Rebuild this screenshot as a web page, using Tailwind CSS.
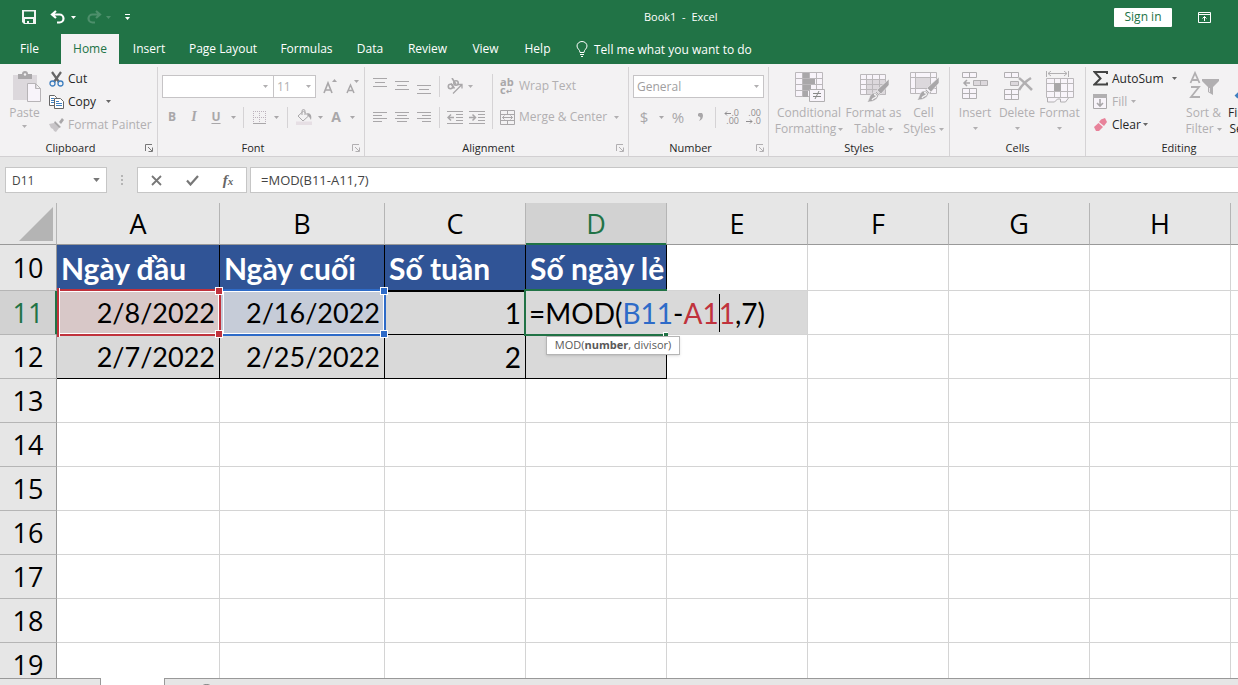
<!DOCTYPE html>
<html lang="vi">

<head>
    <meta charset="UTF-8">
    <meta name="viewport" content="width=device-width, initial-scale=1.0">
    <title>Book1 - Excel</title>
    <script src="https://cdn.jsdelivr.net/npm/@tailwindcss/browser@4"></script>
</head>

<body class="h-screen flex flex-col overflow-hidden bg-[#e6e6e6] font-['Open_Sans','Noto_Sans',sans-serif] text-[12px] leading-4 text-[#262626]">
    <!-- shared symbols -->
    <svg class="hidden">
        <symbol id="caret" viewBox="0 0 5 3"><path d="M0 0h5L2.5 3z" fill="currentColor" /></symbol>
        <symbol id="launcher" viewBox="0 0 8 8"><path d="M.5 7V.5H7M3 3l4 4M7.500 3.500v4h-4" fill="none" stroke="currentColor" /></symbol>
        <symbol id="brush" viewBox="0 0 24 24"><path d="M23 0v6l-8 9-4-4zM10 12l4 4-1 1-4-4z" fill="#a9a7a9" stroke="#f3f2f3" stroke-width=".6" /><path d="M8 14c3 0 5 2 4 4-2 4-7 5-11 5 3-2 2-9 7-9z" fill="#a9a7a9" stroke="#f3f2f3" stroke-width=".6" /><path d="M8 15.500c2 0 3 1.500 2 2.500s-3 1-4 3" stroke="#f3f2f3" fill="none" stroke-width="1.300" /></symbol>
    </svg>

    <!-- title bar -->
    <header class="bg-[#217346] text-white shrink-0">
        <div class="h-[34px] flex items-center relative">
            <div class="flex items-center pl-[22px]">
                <button aria-label="Save" class="w-[14px]"><svg class="size-[14px]" viewBox="0 0 14 14"><path d="M0 0h14v14H2l-2-2zM2 1.500V7h10V1.500zM3 9v4h2v-2h2v2h4V9z" fill="#f2f5f3" fill-rule="evenodd" /></svg></button>
                <button aria-label="Undo" class="ml-[14px]"><svg class="w-[16px] h-[14px]" viewBox="0 0 16 14"><path d="M6 1L2 4.500 6 8M2 4.500h7.500a4 4 0 0 1 0 8H7" fill="none" stroke="#fff" stroke-width="2.200" /></svg></button>
                <button aria-label="Undo list" class="ml-[5px]"><svg class="w-[5px] h-[3px]"><use href="#caret" /></svg></button>
                <button aria-label="Redo" class="ml-[10px] text-[#4d8f6b]"><svg class="w-[16px] h-[14px]" viewBox="0 0 16 14"><path d="M10 1l4 3.500L10 8M14 4.500H6.500a4 4 0 0 0 0 8H9" fill="none" stroke="currentColor" stroke-width="2.200" /></svg></button>
                <button aria-label="Redo list" class="ml-[4px] text-[#4d8f6b]"><svg class="w-[5px] h-[3px]"><use href="#caret" /></svg></button>
                <button aria-label="Customize toolbar" class="ml-[14px]"><svg class="w-[5px] h-[6px]" viewBox="0 0 5 6"><path d="M0 0h5v1H0zM0 3h5L2.500 6z" fill="#fff" /></svg></button>
            </div>
            <h1 class="absolute left-[644px] text-[11px] whitespace-pre">Book1  -  Excel</h1>
            <button class="ml-auto w-[58px] h-[19px] bg-white text-[#217346] rounded-[1px]">Sign in</button>
            <button aria-label="Ribbon display options" class="ml-[26px] mr-[27px]"><svg class="w-[13px] h-[11px]" viewBox="0 0 13 11"><path d="M.5.5h12v10H.5zM.5 2.500h12M6.500 9V4.500M4.500 6.500l2-2 2 2" fill="none" stroke="#fff" /></svg></button>
        </div>
        <nav class="h-[30px] flex text-[12px] leading-[29px]">
            <a href="#" class="w-[61px] pl-[20px]">File</a>
            <a href="#" class="w-[58px] text-center bg-[#f3f2f3] text-[#217346]">Home</a>
            <a href="#" class="w-[56px] ml-[2px] text-center">Insert</a>
            <a href="#" class="w-[92px] text-center">Page Layout</a>
            <a href="#" class="w-[75px] text-center">Formulas</a>
            <a href="#" class="w-[52px] text-center">Data</a>
            <a href="#" class="w-[63px] text-center">Review</a>
            <a href="#" class="w-[53px] text-center">View</a>
            <a href="#" class="w-[51px] text-center">Help</a>
            <a href="#" class="pl-[13px] flex items-center gap-[6px]">
                <svg class="w-[12px] h-[16px]" viewBox="0 0 12 16"><path d="M4 11.500c0-3-3-3.500-3-6.500a5 4.500 0 0 1 10 0c0 3-3 3.500-3 6.500zM4 13.500h4M5 15.500h2" fill="none" stroke="#fff" /></svg>
                Tell me what you want to do
            </a>
        </nav>
    </header>

    <!-- ribbon -->
    <div class="flex shrink-0 pt-[3px] bg-[#f3f2f3] border-b border-[#d2d0d2] text-[#b1afb1] overflow-hidden [&_button]:shrink-0 [&_svg]:shrink-0">
        <!-- clipboard -->
        <section class="w-[158px] shrink-0 border-r border-[#d5d3d5]">
            <div class="h-[69px] flex">
                <button class="w-[49px] pt-[4px] flex flex-col items-center">
                    <svg class="w-[28px] h-[32px] ml-[4px] mb-[2px]" viewBox="0 0 28 32"><path d="M0 4h24v25H0z" fill="#dcd8dc" /><path d="M5 3h4a3 3 0 0 1 6 0h4v5H5z" fill="#a9a7a9" /><circle cx="12" cy="3.500" r="1.200" fill="#f3f2f3" /><path d="M14.500 12.500h8l5 5v13h-13zM22.500 12.500v5h5" fill="#f8f4fa" stroke="#b7b4b7" /></svg>
                    <span>Paste</span>
                    <svg class="w-[5px] h-[3px] mt-[4px]"><use href="#caret" /></svg>
                </button>
                <div class="flex flex-col">
                    <button class="h-[23px] flex items-center gap-[4px] text-[#262626]">
                        <svg class="w-[15px] h-[16px]" viewBox="0 0 15 16"><path d="M3 1l7 10M12 1L5 11" stroke="#666" stroke-width="2.200" /><circle cx="3.500" cy="12.500" r="2.500" fill="none" stroke="#3f7fbf" stroke-width="1.300" /><circle cx="11.500" cy="12.500" r="2.500" fill="none" stroke="#3f7fbf" stroke-width="1.300" /></svg>
                        Cut
                    </button>
                    <button class="h-[23px] flex items-center gap-[4px] text-[#262626]">
                        <svg class="w-[15px] h-[14px]" viewBox="0 0 15 14"><path d="M.5.500h5l2 2v8h-7z" fill="#fff" stroke="#666" /><path d="M2 3.500h3M2 5.500h4M2 7.500h4" stroke="#3f7fbf" /><path d="M5.500 3.500h6l3 3v7h-9z" fill="#fff" stroke="#666" /><path d="M7 6.500h3M7 8.500h6M7 10.500h6" stroke="#3f7fbf" /></svg>
                        Copy
                        <svg class="w-[5px] h-[3px] ml-[6px] text-[#666]"><use href="#caret" /></svg>
                    </button>
                    <button class="h-[23px] flex items-center gap-[4px] whitespace-nowrap">
                        <svg class="w-[15px] h-[14px]" viewBox="0 0 15 14"><path d="M0 6l5-1 5 5-3 4-2-1-1-2-2-1z" fill="#c9c6c9" /><path d="M6 3l6 6-2 1-5-5zM10 4l3-4 2 2-3 4z" fill="#a9a7a9" /></svg>
                        Format Painter
                    </button>
                </div>
            </div>
            <div class="mt-1 flex items-center justify-center relative pr-[16px] text-[11px] text-[#262626]">Clipboard
                <button aria-label="Clipboard settings" class="absolute right-[4px] text-[#777]"><svg class="size-[8px]"><use href="#launcher" /></svg></button>
            </div>
        </section>
        <!-- font -->
        <section class="w-[207px] shrink-0 border-r border-[#d5d3d5]">
            <div class="h-[69px] pt-[8px] flex flex-col gap-[7px]">
                <div class="flex pl-[4px]">
                    <label class="relative flex items-center"><input aria-label="Font" class="w-[112px] h-[23px] bg-white border border-[#c6c4c6] outline-none"><svg class="absolute right-[6px] w-[5px] h-[3px]"><use href="#caret" /></svg></label>
                    <label class="relative flex items-center -ml-px"><input aria-label="Font size" value="11" class="w-[43px] h-[23px] pl-[3px] bg-white border border-[#c6c4c6] outline-none"><svg class="absolute right-[5px] w-[5px] h-[3px]"><use href="#caret" /></svg></label>
                    <button aria-label="Grow font" class="w-[22px] ml-[3px] flex justify-center items-center"><svg class="w-[14px] h-[16px]" viewBox="0 0 14 16"><path d="M1 14L5 4l4 10M2.500 11h5" fill="none" stroke="#a9a7a9" stroke-width="1.600" /><path d="M9 3h5l-2.500-3z" fill="#a9a7a9" /></svg></button>
                    <button aria-label="Shrink font" class="w-[22px] flex justify-center items-center"><svg class="w-[14px] h-[16px]" viewBox="0 0 14 16"><path d="M2 14l3.500-8L9 14M3 11.500h5" fill="none" stroke="#a9a7a9" stroke-width="1.500" /><path d="M9 1h5l-2.500 3z" fill="#a9a7a9" /></svg></button>
                </div>
                <div class="flex items-center h-[24px] pl-[3px] text-[#a9a7a9]">
                    <button class="w-[22px] font-bold">B</button>
                    <button class="w-[22px] font-bold italic font-['Liberation_Serif',serif] text-[14px]">I</button>
                    <button class="w-[22px] font-bold underline underline-offset-2">U</button>
                    <button aria-label="Underline styles" class="w-[12px] flex justify-center"><svg class="w-[5px] h-[3px]"><use href="#caret" /></svg></button>
                    <i class="w-px h-[21px] bg-[#d5d3d5] mx-[4px]"></i>
                    <button aria-label="Borders" class="w-[22px] flex justify-center"><svg class="size-[13px]" viewBox="0 0 13 13"><path d="M.5 0v12M6.500 0v12M12.500 0v12M0 .5h13M0 6.500h13" stroke="#bdb3bd" stroke-dasharray="1 1" /><path d="M0 12.500h13" stroke="#a9a7a9" /></svg></button>
                    <button aria-label="Border styles" class="w-[12px] flex justify-center"><svg class="w-[5px] h-[3px]"><use href="#caret" /></svg></button>
                    <i class="w-px h-[21px] bg-[#d5d3d5] mx-[5px]"></i>
                    <button aria-label="Fill color" class="w-[22px] flex justify-center"><svg class="size-[16px]" viewBox="0 0 16 16"><path d="M0 12.500h16V16H0z" fill="#e6dfe4" /><path d="M7.500 2l5 5-5.500 5-5-5z" fill="#f3f2f3" stroke="#a9a7a9" /><path d="M6 6V2a1.500 1.500 0 0 1 3 0v4" fill="none" stroke="#a9a7a9" /><path d="M11 4c4 0 5 3 4 7-1-1-1-3-3-4z" fill="#a9a7a9" /></svg></button>
                    <button aria-label="Fill colors" class="w-[10px] flex justify-center"><svg class="w-[5px] h-[3px]"><use href="#caret" /></svg></button>
                    <button class="w-[22px] font-bold text-[14px]">A</button>
                    <button aria-label="Font colors" class="w-[10px] flex justify-center"><svg class="w-[5px] h-[3px]"><use href="#caret" /></svg></button>
                </div>
            </div>
            <div class="mt-1 flex items-center justify-center relative text-[11px] text-[#262626] pr-[16px]">Font
                <button aria-label="Font settings" class="absolute right-[4px] text-[#b1afb1]"><svg class="size-[8px]"><use href="#launcher" /></svg></button>
            </div>
        </section>
        <!-- alignment -->
        <section class="w-[264px] shrink-0 border-r border-[#d5d3d5]">
            <div class="h-[69px] pt-[7px] flex pl-[4px]">
                <div class="flex flex-col gap-[7px]">
                    <div class="flex items-center h-[24px]">
                        <button aria-label="Top align" class="w-[22px] flex justify-center"><svg class="w-[14px] h-[16px]" viewBox="0 0 14 16"><path d="M0 .5h14M2 4.500h10M0 8.500h14" stroke="#a9a7a9" /></svg></button>
                        <button aria-label="Middle align" class="w-[22px] flex justify-center"><svg class="w-[14px] h-[16px]" viewBox="0 0 14 16"><path d="M0 3.500h14M2 7.500h10M0 11.500h14" stroke="#a9a7a9" /></svg></button>
                        <button aria-label="Bottom align" class="w-[22px] flex justify-center"><svg class="w-[14px] h-[16px]" viewBox="0 0 14 16"><path d="M0 7.500h14M2 11.500h10M0 15.500h14" stroke="#a9a7a9" /></svg></button>
                        <i class="w-px h-[21px] bg-[#d5d3d5] mx-[4px]"></i>
                        <button aria-label="Orientation" class="w-[22px] flex justify-center"><svg class="size-[16px]" viewBox="0 0 16 16"><g fill="none" stroke="#a9a7a9" stroke-width="1.600"><circle cx="3.500" cy="8.500" r="2.200" /><path d="M4 5.500l3.500 5" /><circle cx="9" cy="5" r="2.200" /><path d="M5 0l4 6.500" /></g><path d="M6 15.500L14.500 7M11 6.500h4v4" fill="none" stroke="#a9a7a9" stroke-width="1.300" /></svg></button>
                        <button aria-label="Orientation list" class="w-[8px] flex justify-center"><svg class="w-[5px] h-[3px]"><use href="#caret" /></svg></button>
                    </div>
                    <div class="flex items-center h-[24px]">
                        <button aria-label="Align left" class="w-[22px] flex justify-center"><svg class="w-[14px] h-[10px]" viewBox="0 0 14 10"><path d="M0 .5h14M0 3.500h9M0 6.500h14M0 9.500h9" stroke="#a9a7a9" /></svg></button>
                        <button aria-label="Center" class="w-[22px] flex justify-center"><svg class="w-[14px] h-[10px]" viewBox="0 0 14 10"><path d="M0 .5h14M2 3.500h10M0 6.500h14M2 9.500h10" stroke="#a9a7a9" /></svg></button>
                        <button aria-label="Align right" class="w-[22px] flex justify-center"><svg class="w-[14px] h-[10px]" viewBox="0 0 14 10"><path d="M0 .5h14M5 3.500h9M0 6.500h14M5 9.500h9" stroke="#a9a7a9" /></svg></button>
                        <i class="w-px h-[21px] bg-[#d5d3d5] mx-[4px]"></i>
                        <button aria-label="Decrease indent" class="w-[22px] flex justify-center"><svg class="w-[16px] h-[13px]" viewBox="0 0 16 13"><path d="M0 .5h16M9 3.500h7M9 6.500h7M9 9.500h7M0 12.500h16" stroke="#a9a7a9" /><path d="M7 6.500H1M4 3.500l-3 3 3 3" fill="none" stroke="#a9a7a9" stroke-width="1.500" /></svg></button>
                        <button aria-label="Increase indent" class="w-[22px] flex justify-center"><svg class="w-[16px] h-[13px]" viewBox="0 0 16 13"><path d="M0 .5h16M9 3.500h7M9 6.500h7M9 9.500h7M0 12.500h16" stroke="#a9a7a9" /><path d="M0 6.500h6M3.500 3.500l3 3-3 3" fill="none" stroke="#a9a7a9" stroke-width="1.500" /></svg></button>
                    </div>
                </div>
                <i class="w-px h-[55px] bg-[#d5d3d5] ml-[4px] mr-[7px]"></i>
                <div class="flex flex-col gap-[7px]">
                    <button class="h-[24px] flex items-center gap-[4px] whitespace-nowrap"><span class="w-[15px] text-[11px] leading-[8px] font-bold text-left text-[#a9a7a9]">ab<br>c<span class="text-[8px]">↵</span></span>Wrap Text</button>
                    <div class="flex items-center h-[24px]">
                        <button class="flex items-center gap-[4px] whitespace-nowrap"><svg class="size-[15px]" viewBox="0 0 15 15"><path d="M.5.500h14v14H.5zM0 4.500h15M0 10.500h15M7.500 0v4M7.500 11v4M2.500 7.500h10M4.500 5.500l-2 2 2 2M10.500 5.500l2 2-2 2" fill="none" stroke="#a9a7a9" /></svg>Merge &amp; Center</button>
                        <button aria-label="Merge options" class="ml-[7px]"><svg class="w-[5px] h-[3px]"><use href="#caret" /></svg></button>
                    </div>
                </div>
            </div>
            <div class="mt-1 flex items-center justify-center relative text-[11px] text-[#262626] pr-[16px]">Alignment
                <button aria-label="Alignment settings" class="absolute right-[4px] text-[#b1afb1]"><svg class="size-[8px]"><use href="#launcher" /></svg></button>
            </div>
        </section>
        <!-- number -->
        <section class="w-[140px] shrink-0 border-r border-[#d5d3d5]">
            <div class="h-[69px] pt-[8px] pl-[4px] flex flex-col gap-[7px]">
                <label class="relative flex items-center w-[131px]">
                    <select aria-label="Number format" class="appearance-none w-full h-[23px] pl-[3px] bg-white border border-[#c6c4c6] text-[12px] text-[#a09ea0]"><option>General</option></select>
                    <svg class="absolute right-[5px] w-[5px] h-[3px]"><use href="#caret" /></svg>
                </label>
                <div class="flex items-center h-[24px] text-[#a9a7a9]">
                    <button class="w-[22px] text-[15px]">$</button>
                    <button aria-label="Currency list" class="w-[12px] flex justify-center"><svg class="w-[5px] h-[3px]"><use href="#caret" /></svg></button>
                    <button class="w-[22px] text-[15px]">%</button>
                    <button aria-label="Comma style" class="w-[22px] flex justify-center"><svg class="w-[5px] h-[8px]" viewBox="0 0 5 8"><path d="M1 0h3l1 2c0 3-1 5-4 6 1-2 2-3 1-4L0 3V1z" fill="#a9a7a9" /></svg></button>
                    <i class="w-px h-[21px] bg-[#d5d3d5] mx-[4px]"></i>
                    <button aria-label="Increase decimal" class="w-[22px] text-[9px] leading-[8px] text-right pr-[3px] text-[#8f8d8f]"><span class="flex justify-end items-center"><svg class="w-[7px] h-[5px]" viewBox="0 0 7 5"><path d="M7 2.500H1M3 .5l-2 2 2 2" fill="none" stroke="currentColor" /></svg>.0</span>.00</button>
                    <button aria-label="Decrease decimal" class="w-[22px] text-[9px] leading-[8px] text-right pr-[3px] text-[#8f8d8f]">.00<span class="flex justify-end items-center"><svg class="w-[7px] h-[5px]" viewBox="0 0 7 5"><path d="M0 2.500h6M4 .5l2 2-2 2" fill="none" stroke="currentColor" /></svg>.0</span></button>
                </div>
            </div>
            <div class="mt-1 flex items-center justify-center relative text-[11px] text-[#262626] pr-[16px]">Number
                <button aria-label="Number settings" class="absolute right-[4px] text-[#b1afb1]"><svg class="size-[8px]"><use href="#launcher" /></svg></button>
            </div>
        </section>
        <!-- styles -->
        <section class="w-[181px] shrink-0 border-r border-[#d5d3d5]">
            <div class="h-[69px] flex pt-[4px] pl-[3px]">
                <button class="w-[74px] flex flex-col items-center">
                    <svg class="size-[32px] mb-[2px]" viewBox="0 0 32 32"><path d="M2.500 1.500h27v24h-27zM2 7.500h28M2 13.500h28M2 19.500h28M9.500 1v25M16.500 1v25M23.500 1v25" fill="#f8f4fa" stroke="#bbb8bb" /><path d="M10 2h6v5h-6zM10 8h12v5H10zM10 14h8v5h-8zM10 20h5v6h-5z" fill="#a9a7a9" /><path d="M16.500 18.500h15v12h-15z" fill="#f8f4fa" stroke="#b1afb1" /><path d="M20 22.500h8M20 25.500h8M26 20l-4 8" stroke="#888" /></svg>
                    <span>Conditional</span>
                    <span class="flex items-center gap-[2px]">Formatting<svg class="w-[5px] h-[3px]"><use href="#caret" /></svg></span>
                </button>
                <button class="w-[55px] flex flex-col items-center whitespace-nowrap">
                    <svg class="size-[32px] mb-[2px]" viewBox="0 0 32 32"><path d="M2.500 3.500h25v20h-25z" fill="#f8f4fa" /><path d="M9 9h19v15H9z" fill="#dcd8dc" /><path d="M2.500 3.500h25v20h-25zM2 8.500h26M2 13.500h26M2 18.500h26M8.500 3v21M14.500 3v21M21.500 3v21" fill="none" stroke="#bbb8bb" /><use href="#brush" x="8" y="8" width="24" height="24" /></svg>
                    <span>Format as</span>
                    <span class="flex items-center gap-[3px]">Table<svg class="w-[5px] h-[3px]"><use href="#caret" /></svg></span>
                </button>
                <button class="w-[45px] flex flex-col items-center">
                    <svg class="size-[32px] mb-[2px]" viewBox="0 0 32 32"><path d="M2.500 1.500h26v21h-26z" fill="#f8f4fa" /><path d="M8 7h14v11H8z" fill="#dcd8dc" /><path d="M2.500 1.500h26v21h-26zM2 6.500h27M2 17.500h27M7.500 1v22M22.500 1v22" fill="none" stroke="#bbb8bb" /><use href="#brush" x="8" y="6" width="24" height="24" /></svg>
                    <span>Cell</span>
                    <span class="flex items-center gap-[3px]">Styles<svg class="w-[5px] h-[3px]"><use href="#caret" /></svg></span>
                </button>
            </div>
            <div class="mt-1 text-center text-[11px] text-[#262626]">Styles</div>
        </section>
        <!-- cells -->
        <section class="w-[136px] shrink-0 border-r border-[#d5d3d5]">
            <div class="h-[69px] flex pt-[4px] pl-[4px]">
                <button class="w-[42px] flex flex-col items-center">
                    <svg class="size-[32px] mb-[2px]" viewBox="0 0 32 32"><path d="M3.500 1.500h14v5h-14zM10.500 1v6M3.500 17.500h14v10h-14zM3 22.500h15M10.500 17v11" fill="#f8f4fa" stroke="#b1afb1" /><path d="M14.500 9.500h14v5h-14zM21.500 9v6" fill="#dcd8dc" stroke="#b1afb1" /><path d="M11 12H5M8 9l-3 3 3 3" fill="none" stroke="#a9a7a9" stroke-width="1.500" /></svg>
                    <span>Insert</span>
                    <svg class="w-[5px] h-[3px] mt-[6px]"><use href="#caret" /></svg>
                </button>
                <button class="w-[42px] flex flex-col items-center">
                    <svg class="size-[32px] mb-[2px]" viewBox="0 0 32 32"><path d="M3.500 1.500h14v5h-14zM10.500 1v6M3.500 18.500h14v10h-14zM3 23.500h15M10.500 18v11" fill="#f8f4fa" stroke="#b1afb1" /><path d="M9.500 10.500h8v4h-8z" fill="#dcd8dc" stroke="#b1afb1" /><path d="M18 7c4 3 8 7 13 12M30 7c-5 3-9 7-12 12" stroke="#b1afb1" stroke-width="2.500" fill="none" /></svg>
                    <span>Delete</span>
                    <svg class="w-[5px] h-[3px] mt-[6px]"><use href="#caret" /></svg>
                </button>
                <button class="w-[43px] flex flex-col items-center">
                    <svg class="size-[32px] mb-[2px]" viewBox="0 0 32 32"><path d="M2.500 0v6M24.500 0v6M4 2.500h19M7 0L4 2.500 7 5M20 0l3 2.500L20 5" fill="none" stroke="#b1afb1" /><path d="M2.500 7.500h27v19h-27zM2 12.500h28M2 20.500h28M10.500 7v20M16.500 7v20M23.500 7v20" fill="#f8f4fa" stroke="#bbb8bb" /><path d="M10 12h7v8h-7z" fill="#a9a7a9" /><path d="M3.500 27v4h7l3-3h3v3h5l3-4" fill="#f8f4fa" stroke="#b1afb1" /></svg>
                    <span>Format</span>
                    <svg class="w-[5px] h-[3px] mt-[6px]"><use href="#caret" /></svg>
                </button>
            </div>
            <div class="mt-1 text-center text-[11px] text-[#262626]">Cells</div>
        </section>
        <!-- editing -->
        <section class="w-[186px] shrink-0">
            <div class="h-[69px] flex pl-[7px]">
                <div class="w-[88px] shrink-0 flex flex-col">
                    <div class="h-[23px] flex items-center text-[#262626]">
                        <button class="flex items-center gap-[4px]"><svg class="w-[15px] h-[15px]" viewBox="0 0 15 15"><path d="M14 3V1H1.500l6 6.500-6 6H14v-2" fill="none" stroke="#444" stroke-width="2" /></svg>AutoSum</button>
                        <button aria-label="AutoSum list" class="ml-auto mr-[4px] text-[#666]"><svg class="w-[5px] h-[3px]"><use href="#caret" /></svg></button>
                    </div>
                    <button class="h-[23px] flex items-center gap-[4px]"><svg class="w-[14px] h-[15px] mr-px" viewBox="0 0 14 15"><path d="M.5.500h13v14H.5z" fill="#f8f4fa" stroke="#a9a7a9" /><path d="M0 0h14v4H0z" fill="#b1afb1" /><path d="M7 5v7M4 9l3 3 3-3" fill="none" stroke="#a9a7a9" stroke-width="1.600" /></svg>Fill<svg class="w-[5px] h-[3px]"><use href="#caret" /></svg></button>
                    <button class="h-[23px] flex items-center gap-[4px] text-[#262626]"><svg class="w-[15px] h-[14px]" viewBox="0 0 15 14"><path d="M8 1.500l4-1.500 2 4-3 4-5-4z" fill="#e8829a" /><path d="M5.500 5l4.500 4-4 4H3L1 9z" fill="#e8829a" /></svg>Clear<svg class="w-[5px] h-[3px] -ml-[2px] text-[#666]"><use href="#caret" /></svg></button>
                </div>
                <button class="w-[45px] pt-[4px] flex flex-col items-center whitespace-nowrap">
                    <svg class="size-[32px] mb-[2px]" viewBox="0 0 32 32"><path d="M2.500 12L7 2l4.500 10M4 9h6M3 16h8L3 26h9" fill="none" stroke="#b1afb1" stroke-width="1.800" /><path d="M14 8h17v2l-6 6v8l-5-3v-5l-6-6z" fill="#b1afb1" /><path d="M21.500 17v4" stroke="#e8e4e8" /></svg>
                    <span>Sort &amp;</span>
                    <span class="flex items-center gap-[3px]">Filter<svg class="w-[5px] h-[3px]"><use href="#caret" /></svg></span>
                </button>
                <button class="w-[40px] pt-[4px] flex flex-col items-center text-[#262626] whitespace-nowrap">
                    <svg class="size-[32px] mb-[2px]" viewBox="0 0 32 32"><circle cx="20" cy="12" r="8" fill="none" stroke="#3f7fbf" stroke-width="2" /><path d="M14 18l-8 8" stroke="#3f7fbf" stroke-width="4" /></svg>
                    <span>Find &amp;</span>
                    <span>Select</span>
                </button>
            </div>
            <div class="mt-1 text-center text-[11px] text-[#262626]">Editing</div>
        </section>
    </div>

    <!-- formula bar -->
    <div class="flex shrink-0 items-start h-[46px] pt-[10px] pl-[5px] text-[#444]">
        <label class="relative flex items-center">
            <input aria-label="Name box" value="D11" class="w-[102px] h-[26px] pl-[6px] bg-white border border-[#c6c6c6] outline-none">
            <svg class="absolute right-[7px] w-[7px] h-[4px] text-[#777]" viewBox="0 0 5 3"><use href="#caret" /></svg>
        </label>
        <svg class="w-[2px] h-[10px] mt-[8px] mx-[14px]" viewBox="0 0 2 10"><path d="M0 0h2v2H0zM0 4h2v2H0zM0 8h2v2H0z" fill="#b5b5b5" /></svg>
        <div class="h-[26px] w-[110px] flex items-center bg-white border border-[#c6c6c6]">
            <button aria-label="Cancel" class="w-[36px] flex justify-center"><svg class="size-[11px]" viewBox="0 0 11 11"><path d="M1 1l9 9M10 1l-9 9" stroke="#777" stroke-width="1.800" /></svg></button>
            <button aria-label="Enter" class="w-[36px] flex justify-center"><svg class="w-[13px] h-[11px]" viewBox="0 0 13 11"><path d="M1 5.500L4.500 9.500 12 1" fill="none" stroke="#777" stroke-width="2.200" /></svg></button>
            <button class="w-[36px] font-['Liberation_Serif',serif] italic font-bold text-[15px] text-[#666]">f<span class="text-[11px]">x</span></button>
        </div>
        <input aria-label="Formula" value="=MOD(B11-A11,7)" class="flex-1 min-w-0 h-[26px] ml-[3px] pl-[10px] bg-white border border-r-0 border-[#c6c6c6] text-[13px] outline-none">
    </div>

    <!-- sheet -->
    <main class="flex-1 min-h-0 overflow-hidden bg-white font-['Lato',sans-serif] text-[28px] leading-[34px] text-black">
        <table class="table-fixed border-separate border-spacing-0 w-full [&_th]:p-0 [&_th]:font-normal [&_th]:font-['Open_Sans',sans-serif] [&_th]:text-[27px] [&_th]:border-r [&_th]:border-b [&_thead_th]:border-r-[#b5b5b5] [&_thead_th]:border-b-[#999] [&_tbody_th]:border-r-[#999] [&_tbody_th]:border-b-[#b5b5b5] [&_th]:bg-[#e6e6e6] [&_td]:px-[4px] [&_td]:py-0 [&_td]:border-r [&_td]:border-b [&_td]:border-[#d4d4d4] [&_td]:whitespace-nowrap [&_tr>*:last-child]:border-r-0">
            <colgroup>
                <col class="w-[57px]"><col class="w-[163px]"><col class="w-[165px]"><col class="w-[141px]"><col class="w-[141px]"><col class="w-[141px]"><col class="w-[141px]"><col class="w-[141px]"><col class="w-[141px]"><col>
            </colgroup>
            <thead>
                <tr class="h-[42px]">
                    <th><svg class="w-[34px] h-[34px] ml-[19px]" viewBox="0 0 34 34"><path d="M34 0v34H0z" fill="#b4b4b4" /></svg></th>
                    <th>A</th><th>B</th><th>C</th>
                    <th class="bg-[#d2d2d2]! border-b-[#217346]! shadow-[inset_0_-1px_#217346] text-[#217346]">D</th>
                    <th>E</th><th>F</th><th>G</th><th>H</th><th></th>
                </tr>
            </thead>
            <tbody>
                <tr class="h-[46px] [&_td]:font-bold [&_td]:text-[30px]">
                    <th>10</th>
                    <td class="bg-[#305496] text-white border-black!">Ngày đầu</td>
                    <td class="bg-[#305496] text-white border-black!">Ngày cuối</td>
                    <td class="bg-[#305496] text-white border-black!">Số tuần</td>
                    <td class="bg-[#305496] text-white border-black!">Số ngày lẻ</td>
                    <td></td><td></td><td></td><td></td><td></td>
                </tr>
                <tr class="h-[44px] [&_td]:text-right">
                    <th class="bg-[#d2d2d2]! border-r-[#217346]! shadow-[inset_-1px_0_#217346] text-[#217346]">11</th>
                    <td class="relative bg-[#d8c8c8] border-black! text-[27px]">2/8/2022
                        <div class="absolute z-10 left-0 -top-[2px] -right-[2px] -bottom-[2px] border-2 border-[#c0323c] outline outline-1 -outline-offset-[3px] outline-white">
                            <i class="absolute -top-[3px] -right-[3px] size-[6px] bg-[#c0323c] ring-1 ring-white"></i>
                            <i class="absolute -bottom-[3px] -right-[3px] size-[6px] bg-[#c0323c] ring-1 ring-white"></i>
                            <i class="absolute -top-[3px] -left-[2px] w-[3px] h-[6px] bg-[#c0323c] border-r border-white"></i>
                            <i class="absolute -bottom-[3px] -left-[2px] w-[3px] h-[6px] bg-[#c0323c] border-r border-white"></i>
                        </div>
                    </td>
                    <td class="relative bg-[#c6ccd8] border-black! text-[27px]">2/16/2022
                        <div class="absolute left-px -top-[2px] -right-[2px] -bottom-[2px] border-2 border-l-0 border-[#2e6bc8] outline outline-1 -outline-offset-[3px] outline-white">
                            <i class="absolute -top-[3px] -right-[3px] size-[6px] bg-[#2e6bc8] ring-1 ring-white"></i>
                            <i class="absolute -bottom-[3px] -right-[3px] size-[6px] bg-[#2e6bc8] ring-1 ring-white"></i>
                        </div>
                    </td>
                    <td class="bg-[#d9d9d9] border-black! shadow-[inset_0_1px_#000]">1</td>
                    <td class="relative bg-[#d9d9d9] border-black!">
                        <!-- the cell being edited spills over its right neighbour -->
                        <div contenteditable="true" role="textbox" aria-label="D11" class="absolute z-10 left-0 top-0 w-[281px] h-[43px] pl-[3px] pt-[5px] text-left bg-[#d9d9d9] outline-none">=MOD(<span class="text-[#2e6bc8]">B11</span>-<span class="text-[#c0323c]">A1</span><i class="absolute w-px h-[38px] top-[3px] bg-black"></i><span class="text-[#c0323c]">1</span>,7)</div>
                        <div class="absolute z-20 -left-[2px] -top-[2px] -right-[1px] -bottom-[2px] border-2 border-r-0 border-[#217346] pointer-events-none">
                            <i class="absolute -bottom-[3px] -right-px size-[5px] bg-[#217346] border-t border-l border-white"></i>
                        </div>
                        <!-- function hint -->
                        <div class="absolute z-30 left-[20px] top-[45px] w-[134px] h-[19px] text-center bg-white border border-[#b5b5b5] shadow-sm font-['Open_Sans',sans-serif] text-[11px] leading-4 text-[#595959]">MOD(<b>number</b>, divisor)</div>
                    </td>
                    <td></td><td></td><td></td><td></td><td></td>
                </tr>
                <tr class="h-[44px] [&_td]:text-right">
                    <th>12</th>
                    <td class="bg-[#d9d9d9] border-black! text-[27px]">2/7/2022</td>
                    <td class="bg-[#d9d9d9] border-black! text-[27px]">2/25/2022</td>
                    <td class="bg-[#d9d9d9] border-black!">2</td>
                    <td class="bg-[#d9d9d9] border-black!"></td>
                    <td></td><td></td><td></td><td></td><td></td>
                </tr>
                <tr class="h-[44px]"><th>13</th><td></td><td></td><td></td><td></td><td></td><td></td><td></td><td></td><td></td></tr>
                <tr class="h-[44px]"><th>14</th><td></td><td></td><td></td><td></td><td></td><td></td><td></td><td></td><td></td></tr>
                <tr class="h-[44px]"><th>15</th><td></td><td></td><td></td><td></td><td></td><td></td><td></td><td></td><td></td></tr>
                <tr class="h-[44px]"><th>16</th><td></td><td></td><td></td><td></td><td></td><td></td><td></td><td></td><td></td></tr>
                <tr class="h-[44px]"><th>17</th><td></td><td></td><td></td><td></td><td></td><td></td><td></td><td></td><td></td></tr>
                <tr class="h-[44px]"><th>18</th><td></td><td></td><td></td><td></td><td></td><td></td><td></td><td></td><td></td></tr>
                <tr class="h-[44px]"><th>19</th><td></td><td></td><td></td><td></td><td></td><td></td><td></td><td></td><td></td></tr>
            </tbody>
        </table>
    </main>

    <!-- sheet tabs, cut off by the window edge -->
    <footer class="h-[7px] shrink-0 flex overflow-hidden">
        <div class="w-[101px] border-t border-r border-[#999]"></div>
        <div class="w-[63px] bg-white"></div>
        <div class="flex-1 border-t border-l border-[#999] pl-[34px] pt-[5px]">
            <button aria-label="New sheet" class="block size-[15px] rounded-full border border-[#777]"></button>
        </div>
    </footer>
</body>

</html>
